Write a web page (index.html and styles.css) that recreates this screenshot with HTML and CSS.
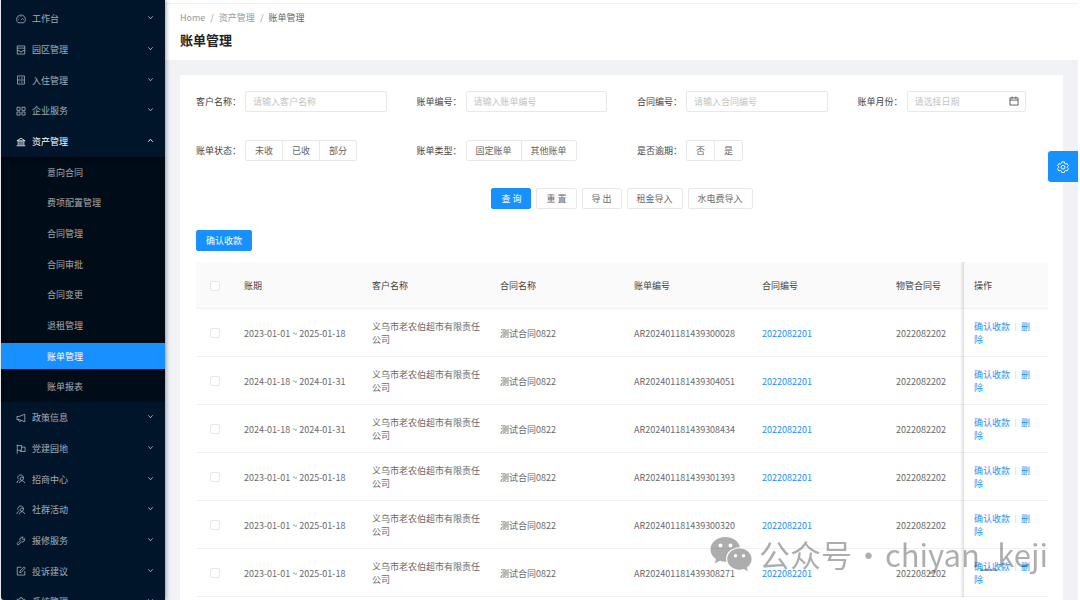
FILE: index.html
```html
<!DOCTYPE html>
<html lang="zh-CN">
<head>
<meta charset="utf-8">
<meta name="viewport" content="width=device-width, initial-scale=1">
<title>账单管理</title>
<link rel="stylesheet" href="styles.css">
</head>
<body>
<svg class="sprite" aria-hidden="true">
  <symbol id="i-down" viewBox="0 0 16 16"><path d="M3 5l5 6 5-6"/></symbol>
  <symbol id="i-up" viewBox="0 0 16 16"><path d="M3 11l5-6 5 6"/></symbol>
  <symbol id="i-dash" viewBox="0 0 16 16"><path d="M3.5 14a7 7 0 1 1 9 0zM8 9.5l2.8-2.8M8 3.2v1.2M3.2 8.5h1.2M11.6 8.5h1.2M4.6 5l.8.8"/></symbol>
  <symbol id="i-park" viewBox="0 0 16 16"><path d="M2 1.5h12v13H2zM2 5h12M2 9h3.5l1 2h3l1-2H14"/></symbol>
  <symbol id="i-in" viewBox="0 0 16 16"><path d="M2.5 1.5h11v13h-11zM2.5 8h11M5 4.8h1M8 4.8h3M5 11.3h1M8 11.3h3"/></symbol>
  <symbol id="i-apps" viewBox="0 0 16 16"><path d="M1.5 2h5v5h-5zM9.5 2h5v5h-5zM1.5 9.5h5v5h-5zM9.5 9.5h5v5h-5z"/></symbol>
  <symbol id="i-bank" viewBox="0 0 16 16"><path d="M1.5 6L8 2l6.5 4zM3.5 6.5V13M6.5 6.5V13M9.5 6.5V13M12.5 6.5V13M1 14h14"/></symbol>
  <symbol id="i-horn" viewBox="0 0 16 16"><path d="M1.5 5.5H5L14 2v12l-9-3.5H1.5zM4 10.5c0 4 4 4 4 1.2"/></symbol>
  <symbol id="i-flag" viewBox="0 0 16 16"><path d="M2 1v14.5M2 2.5h7v7.5H2M9 5h5.5v7H7v-2"/></symbol>
  <symbol id="i-team" viewBox="0 0 16 16"><path d="M3 7.5A4.6 4.6 0 1 1 12 6.5M1.500 14.500c.3-3 1.800-4.500 3.800-5.300M8.300 9.800a2.500 2.500 0 1 0 0-4.600 2.500 2.500 0 0 0 0 4.600zM5.500 14.500c.6-5 6.800-5 8.500 0"/></symbol>
  <symbol id="i-tool" viewBox="0 0 16 16"><path d="M13.800 4.200l-2.600 1.600-1.400-1.400 1.600-2.600a4 4 0 0 0-4.800 5.500L1.500 12.500l2 2 5.200-5.200a4 4 0 0 0 5.100-5.100z"/></symbol>
  <symbol id="i-edit" viewBox="0 0 16 16"><path d="M9 2H2v12.500h12V8M6 10.500l.5-2.500L13 1.500l1.800 1.800L8.500 10z"/></symbol>
  <symbol id="i-gear" viewBox="0 0 16 16"><path d="M6.300 1.200h3.400l.5 2 1.300.8 2-.6 1.700 2.900-1.500 1.500v1l1.500 1.500-1.700 2.900-2-.6-1.300.8-.5 2H6.300l-.5-2-1.300-.8-2 .6-1.700-2.900 1.500-1.500v-1L.8 6.300l1.700-2.900 2 .6 1.300-.8z"/><circle cx="8" cy="8.300" r="2.500"/></symbol>
  <symbol id="i-cal" viewBox="0 0 16 16"><path d="M1.500 3h13v11.500h-13zM1.500 6.500h13M5 1v3.500M11 1v3.500"/></symbol>
</svg>

<div class="layout">
  <aside class="sidebar">
    <nav>
      <ul class="menu">
        <li><a class="menu-link" href="#"><svg class="icon"><use href="#i-dash"/></svg><span>工作台</span><svg class="arrow"><use href="#i-down"/></svg></a></li>
        <li><a class="menu-link" href="#"><svg class="icon"><use href="#i-park"/></svg><span>园区管理</span><svg class="arrow"><use href="#i-down"/></svg></a></li>
        <li><a class="menu-link" href="#"><svg class="icon"><use href="#i-in"/></svg><span>入住管理</span><svg class="arrow"><use href="#i-down"/></svg></a></li>
        <li><a class="menu-link" href="#"><svg class="icon"><use href="#i-apps"/></svg><span>企业服务</span><svg class="arrow"><use href="#i-down"/></svg></a></li>
        <li><a class="menu-link open" href="#"><svg class="icon"><use href="#i-bank"/></svg><span>资产管理</span><svg class="arrow"><use href="#i-up"/></svg></a></li>
      </ul>
      <ul class="menu submenu">
        <li><a class="menu-link" href="#">意向合同</a></li>
        <li><a class="menu-link" href="#">费项配置管理</a></li>
        <li><a class="menu-link" href="#">合同管理</a></li>
        <li><a class="menu-link" href="#">合同审批</a></li>
        <li><a class="menu-link" href="#">合同变更</a></li>
        <li><a class="menu-link" href="#">退租管理</a></li>
        <li><a class="menu-link selected" href="#" aria-current="page">账单管理</a></li>
        <li><a class="menu-link" href="#">账单报表</a></li>
      </ul>
      <ul class="menu">
        <li><a class="menu-link" href="#"><svg class="icon"><use href="#i-horn"/></svg><span>政策信息</span><svg class="arrow"><use href="#i-down"/></svg></a></li>
        <li><a class="menu-link" href="#"><svg class="icon"><use href="#i-flag"/></svg><span>党建园地</span><svg class="arrow"><use href="#i-down"/></svg></a></li>
        <li><a class="menu-link" href="#"><svg class="icon"><use href="#i-team"/></svg><span>招商中心</span><svg class="arrow"><use href="#i-down"/></svg></a></li>
        <li><a class="menu-link" href="#"><svg class="icon"><use href="#i-team"/></svg><span>社群活动</span><svg class="arrow"><use href="#i-down"/></svg></a></li>
        <li><a class="menu-link" href="#"><svg class="icon"><use href="#i-tool"/></svg><span>报修服务</span><svg class="arrow"><use href="#i-down"/></svg></a></li>
        <li><a class="menu-link" href="#"><svg class="icon"><use href="#i-edit"/></svg><span>投诉建议</span><svg class="arrow"><use href="#i-down"/></svg></a></li>
        <li><a class="menu-link" href="#"><svg class="icon"><use href="#i-gear"/></svg><span>系统管理</span><svg class="arrow"><use href="#i-down"/></svg></a></li>
      </ul>
    </nav>
  </aside>

  <main class="main">
    <header class="page-header">
      <nav class="breadcrumb"><a href="#">Home</a><i>/</i><a href="#">资产管理</a><i>/</i><span>账单管理</span></nav>
      <h1>账单管理</h1>
    </header>

    <section class="card">
      <form class="filters">
        <div class="field"><label for="customer">客户名称：</label><input class="text-input" id="customer" type="text" placeholder="请输入客户名称"></div>
        <div class="field"><label for="bill">账单编号：</label><input class="text-input" id="bill" type="text" placeholder="请输入账单编号"></div>
        <div class="field"><label for="contract">合同编号：</label><input class="text-input" id="contract" type="text" placeholder="请输入合同编号"></div>
        <div class="field date-field"><label for="month">账单月份：</label><div class="date-box"><input class="text-input" id="month" type="text" placeholder="请选择日期"><svg class="cal"><use href="#i-cal"/></svg></div></div>
        <div class="field" role="radiogroup" aria-labelledby="l-state"><span class="label" id="l-state">账单状态：</span><div class="radios"><label><input type="radio" name="state">未收</label><label><input type="radio" name="state">已收</label><label><input type="radio" name="state">部分</label></div></div>
        <div class="field" role="radiogroup" aria-labelledby="l-type"><span class="label" id="l-type">账单类型：</span><div class="radios"><label><input type="radio" name="type">固定账单</label><label><input type="radio" name="type">其他账单</label></div></div>
        <div class="field" role="radiogroup" aria-labelledby="l-late"><span class="label" id="l-late">是否逾期：</span><div class="radios"><label><input type="radio" name="late">否</label><label><input type="radio" name="late">是</label></div></div>
      </form>
      <div class="actions">
        <button class="btn primary" type="button">查 询</button>
        <button class="btn" type="button">重 置</button>
        <button class="btn" type="button">导 出</button>
        <button class="btn" type="button">租金导入</button>
        <button class="btn" type="button">水电费导入</button>
      </div>
      <div class="toolbar"><button class="btn primary" type="button">确认收款</button></div>

      <table class="bills">
        <colgroup><col class="c-check"><col class="c-mid"><col class="c-mid"><col class="c-wide"><col class="c-mid"><col class="c-wide"><col class="c-prop"><col class="c-ops"></colgroup>
        <thead>
          <tr><th><input class="check" type="checkbox" aria-label="全选"></th><th>账期</th><th>客户名称</th><th>合同名称</th><th>账单编号</th><th>合同编号</th><th>物管合同号</th><th class="fixed">操作</th></tr>
        </thead>
        <tbody>
          <tr><td><input class="check" type="checkbox" aria-label="选择"></td><td>2023-01-01 ~ 2025-01-18</td><td>义乌市老农伯超市有限责任公司</td><td>测试合同0822</td><td>AR202401181439300028</td><td><a href="#">2022082201</a></td><td>2022082202</td><td class="fixed"><a href="#">确认收款</a><i class="divider"></i><a href="#">删除</a></td></tr>
          <tr><td><input class="check" type="checkbox" aria-label="选择"></td><td>2024-01-18 ~ 2024-01-31</td><td>义乌市老农伯超市有限责任公司</td><td>测试合同0822</td><td>AR202401181439304051</td><td><a href="#">2022082201</a></td><td>2022082202</td><td class="fixed"><a href="#">确认收款</a><i class="divider"></i><a href="#">删除</a></td></tr>
          <tr><td><input class="check" type="checkbox" aria-label="选择"></td><td>2024-01-18 ~ 2024-01-31</td><td>义乌市老农伯超市有限责任公司</td><td>测试合同0822</td><td>AR202401181439308434</td><td><a href="#">2022082201</a></td><td>2022082202</td><td class="fixed"><a href="#">确认收款</a><i class="divider"></i><a href="#">删除</a></td></tr>
          <tr><td><input class="check" type="checkbox" aria-label="选择"></td><td>2023-01-01 ~ 2025-01-18</td><td>义乌市老农伯超市有限责任公司</td><td>测试合同0822</td><td>AR202401181439301393</td><td><a href="#">2022082201</a></td><td>2022082202</td><td class="fixed"><a href="#">确认收款</a><i class="divider"></i><a href="#">删除</a></td></tr>
          <tr><td><input class="check" type="checkbox" aria-label="选择"></td><td>2023-01-01 ~ 2025-01-18</td><td>义乌市老农伯超市有限责任公司</td><td>测试合同0822</td><td>AR202401181439300320</td><td><a href="#">2022082201</a></td><td>2022082202</td><td class="fixed"><a href="#">确认收款</a><i class="divider"></i><a href="#">删除</a></td></tr>
          <tr><td><input class="check" type="checkbox" aria-label="选择"></td><td>2023-01-01 ~ 2025-01-18</td><td>义乌市老农伯超市有限责任公司</td><td>测试合同0822</td><td>AR202401181439308271</td><td><a href="#">2022082201</a></td><td>2022082202</td><td class="fixed"><a href="#">确认收款</a><i class="divider"></i><a href="#">删除</a></td></tr>
        </tbody>
      </table>
    </section>
  </main>
</div>

<button class="settings" type="button" aria-label="设置"><svg><use href="#i-gear"/></svg></button>

<div class="watermark">
  <svg viewBox="0 0 42 36"><path fill-rule="evenodd" d="M15.500 1C7 1 .5 6.500.5 13.500c0 4 2.200 7.300 5.500 9.600L4.700 27.500l5.200-2.700c2 .6 3.700.9 5.700.9h.8C14.500 17.500 21 11 30 11.200 28.600 5.200 22.500 1 15.500 1zM10.500 7.500a2 2 0 1 1 0 4 2 2 0 0 1 0-4zM20.500 7.500a2 2 0 1 1 0 4 2 2 0 0 1 0-4z"/><path fill-rule="evenodd" d="M29.500 12.500c-7 0-12.300 4.800-12.300 10.600S22.500 33.700 29.500 33.700c1.500 0 3-.3 4.400-.7l4 2.200-1.100-3.700c2.900-2.100 4.800-5 4.800-8.400 0-5.800-5.300-10.600-12.100-10.600zM25.500 18a1.700 1.700 0 1 1 0 3.400 1.700 1.700 0 0 1 0-3.400zM33.500 18a1.700 1.700 0 1 1 0 3.400 1.700 1.700 0 0 1 0-3.400z"/></svg>
  <span>公众号</span><span>·</span><span>chiyan_keji</span>
</div>
</body>
</html>
```
FILE: styles.css
```css
* { box-sizing: border-box; }

body {
  margin: 0;
  background: #fff;
  color: #6a6a6a;
  font: 9px/13px "Noto Sans CJK SC", sans-serif;
  overflow: hidden;
}

a { color: #2492f5; text-decoration: none; }
ul { list-style: none; margin: 0; padding: 0; }
i { font-style: normal; }
button, input { font: inherit; color: inherit; }
svg { fill: none; stroke: currentColor; stroke-width: 1.3; }
.sprite { position: absolute; width: 0; height: 0; }

.layout {
  display: flex;
  height: 100vh;
  padding: 0 2px 0 1px;
}

/* Sidebar */
.sidebar {
  position: relative;
  z-index: 1;
  flex: 0 0 164px;
  padding-top: 3px;
  overflow: hidden;
  background: #001529;
  border-radius: 0 0 0 3px;
  box-shadow: 1px 0 4px rgba(0, 21, 41, .4);
}
.menu { display: grid; grid-auto-rows: 31px 31px 30px; align-items: center; }
.menu-link {
  display: flex;
  align-items: center;
  height: 26px;
  padding: 0 11px 0 15px;
  color: rgba(255, 255, 255, .65);
}
.menu-link span { flex: 1; }
.menu-link.open { color: #fff; }
.icon { width: 10px; height: 10px; margin-right: 6px; }
.arrow { width: 7px; height: 7px; stroke-width: 2; margin-bottom: 2px; }
.submenu {
  grid-auto-rows: 30px 31px 31px;
  background: #000c17;
  box-shadow: inset 0 2px 4px rgba(0, 0, 0, .45);
}
.submenu .menu-link { padding-left: 46px; }
.submenu .selected { background: #1890ff; color: #fff; }

/* Main column */
.main { flex: 1; min-width: 0; display: flex; flex-direction: column; background: #f0f2f5; }
.page-header {
  padding: 8px 15px 9px;
  background: #fff;
  border-top: 3px solid #fff;
  box-shadow: inset 0 1px 1px #eceef0;
}
.breadcrumb { display: flex; gap: 5px; color: #666; }
.breadcrumb a, .breadcrumb i { color: #999; }
h1 { margin: 5px 0 0; font-size: 13px; line-height: 22px; color: #222; }
.card { flex: 1; margin: 15px 15px 0; padding: 16px 15px 0 16px; background: #fff; }

/* Filters */
.filters { display: grid; grid-template-columns: repeat(4, 1fr); gap: 28px 30px; }
.field { display: flex; align-items: center; color: #444; height: 21px; }
.field > label, .field > .label { flex: 0 0 49px; white-space: nowrap; }
.text-input {
  flex: 1;
  min-width: 0;
  width: 100%;
  height: 21px;
  padding: 0 7px 1px;
  border: 1px solid #e8e8e8;
  border-radius: 2px;
  background: #fff;
  outline: 0;
}
.text-input::placeholder { color: #c4c4c4; }
.date-field { padding-right: 22px; }
.date-box { position: relative; flex: 1; display: flex; }
.cal { position: absolute; right: 7px; top: 5px; width: 10px; height: 10px; }
.radios { display: flex; color: #666; }
.radios label {
  height: 21px;
  padding: 0 9px;
  border: 1px solid #e8e8e8;
  line-height: 19px;
}
.radios label + label { margin-left: -1px; }
.radios label:first-child { border-radius: 2px 0 0 2px; }
.radios label:last-child { border-radius: 0 2px 2px 0; }
.radios input { position: absolute; opacity: 0; pointer-events: none; }

.btn {
  height: 21px;
  padding: 0 9px;
  border: 1px solid #e8e8e8;
  border-radius: 2px;
  background: #fff;
  line-height: 19px;
  white-space: pre;
}
.btn.primary { background: #1890ff; border-color: #1890ff; color: #fff; }
.actions { display: flex; justify-content: center; gap: 5px; margin-top: 27px; }
.toolbar { display: flex; margin: 21px 0 11px; }

/* Table */
.bills { width: 100%; table-layout: fixed; border-collapse: separate; border-spacing: 0; }
.c-check { width: 38px; }
.c-mid { width: 128px; }
.c-wide { width: 134px; }
.c-prop { width: 78px; }
.c-ops { width: 84px; }
.bills th, .bills td { padding: 11px 10px 10px; border-bottom: 1px solid #f0f0f0; text-align: left; }
.bills th { height: 47px; background: #fafafa; color: #444; font-weight: 400; }
.bills .fixed { position: relative; }
.fixed::before {
  content: "";
  position: absolute;
  top: 0;
  bottom: -1px;
  left: -4px;
  width: 4px;
  background: linear-gradient(to right, rgba(0, 0, 0, 0), rgba(0, 0, 0, .12));
}
.bills th:first-child, .bills td:first-child { padding-left: 14px; }
.check {
  appearance: none;
  display: block;
  width: 10px;
  height: 10px;
  margin: 0;
  border: 1px solid #e8e8e8;
  border-radius: 2px;
  background: #fff;
}
.divider { display: inline-block; width: 1px; height: 8px; margin: 0 5px; background: #e8e8e8; vertical-align: -1px; }

/* Overlays */
.settings {
  position: fixed;
  z-index: 2;
  top: 151px;
  right: 2px;
  display: grid;
  place-items: center;
  width: 30px;
  height: 31px;
  padding: 0;
  border: 0;
  border-radius: 3px 0 0 3px;
  background: #1890ff;
  color: #fff;
}
.settings svg { width: 12px; height: 12px; }
.watermark {
  position: fixed;
  z-index: 3;
  right: 32px;
  bottom: 24px;
  display: flex;
  align-items: center;
  gap: 1px;
  color: #000;
  font-size: 31px;
  line-height: 44px;
  opacity: .32;
  pointer-events: none;
}
.watermark svg { width: 42px; height: 36px; margin-right: 6px; fill: currentColor; stroke: none; }
```
